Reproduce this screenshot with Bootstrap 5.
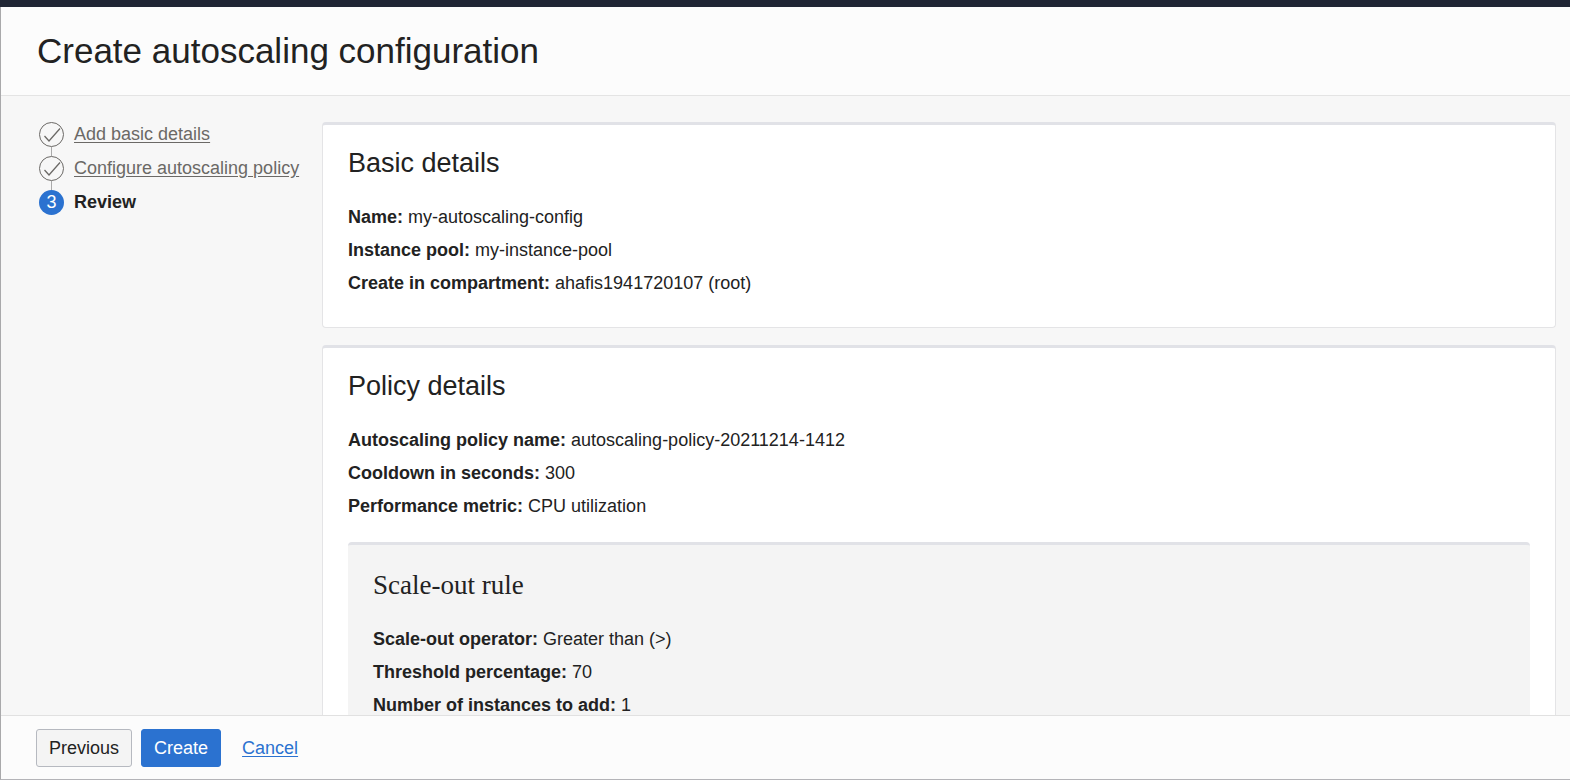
<!DOCTYPE html>
<html lang="en">
<head>
<meta charset="utf-8">
<meta name="viewport" content="width=device-width, initial-scale=1">
<title>Create autoscaling configuration</title>
<link href="https://cdn.jsdelivr.net/npm/bootstrap@5.3.0/dist/css/bootstrap.min.css" rel="stylesheet">
<style>
  body { font-family: "Liberation Sans", Arial, sans-serif; font-size: 18px; line-height: 33px; color: #222; background: #f7f7f7; }
  .top-strip { height: 7px; background: #202634; }
  .dialog-frame { border-left: 1px solid #a9a9ab; border-bottom: 1px solid #b4b4b8; min-height: 0; }
  .dialog-head { background: #fcfcfc; border-bottom: 1px solid #e4e4e4; padding: 22px 36px; }
  .dialog-head h1 { font-size: 35px; line-height: 44px; font-weight: 400; }
  .dialog-main { min-height: 0; padding: 26px 14px 0 0; }
  .step-nav { width: 321px; padding-left: 38px; margin-top: -4px; }
  .step-item { gap: 10px; height: 34px; line-height: 32px; }
  .step-item a { color: #6b6966; text-underline-offset: 2px; }
  .step-num { width: 25px; height: 25px; margin-top: 4px; background: #2b72d0; color: #fff; line-height: 25px; }
  .step-icon { width: 25px; height: 34px; overflow: visible; }
  .review-card { background: #fff; border: 1px solid #e4e4e6; border-top: 3px solid #e1e2e7; border-radius: 4px; padding: 20px 25px 27px; margin-bottom: 17px; }
  .rule-panel { background: #f4f4f4; border-top: 3px solid #e1e2e7; border-radius: 4px; padding: 22px 25px 27px; margin-top: 19px; }
  .review-card h2, .rule-panel h3 { font-size: 27px; line-height: 36px; font-weight: 400; margin-bottom: 20px; }
  .rule-panel h3 { font-family: "Liberation Serif", "Times New Roman", serif; }
  dl dt, dl dd { display: inline; margin: 0; }
  .dialog-foot { background: #fcfcfc; border-top: 1px solid #e1e1e1; padding: 13px 35px 12px; }
  .dialog-foot .btn { font-size: 18px; line-height: 24px; padding: 6px 12px; border-radius: 3px; }
  .btn-prev { --bs-btn-bg: #f4f4f4; --bs-btn-border-color: #b6b9c0; --bs-btn-color: #222; --bs-btn-hover-bg: #e9e9e9; --bs-btn-hover-border-color: #b6b9c0; margin-right: 9px; }
  .btn-create { --bs-btn-bg: #2b72d0; --bs-btn-border-color: #2b72d0; --bs-btn-color: #fff; --bs-btn-hover-bg: #2260b2; --bs-btn-hover-color: #fff; margin-right: 21px; }
  .dialog-foot a { color: #2b72d0; line-height: 24px; text-underline-offset: 2px; }
</style>
</head>
<body>
<div class="vh-100 d-flex flex-column overflow-hidden">
  <div class="top-strip flex-shrink-0"></div>
  <div class="dialog-frame flex-grow-1 d-flex flex-column">
    <header class="dialog-head">
      <h1 class="mb-0">Create autoscaling configuration</h1>
    </header>

    <div class="dialog-main flex-grow-1 d-flex align-items-start overflow-hidden">
      <nav class="step-nav flex-shrink-0" aria-label="Steps">
        <ol class="list-unstyled mb-0">
          <li class="step-item d-flex align-items-start">
            <svg class="step-icon" viewBox="0 0 25 34" fill="none" stroke="#6b6966" aria-hidden="true"><path d="M12.5 29v9" stroke="#aaa"/><circle cx="12.5" cy="16.5" r="12"/><path d="M5.5 18l4.5 5L21 10.5" stroke-width="1.3"/></svg>
            <a href="#">Add basic details</a>
          </li>
          <li class="step-item d-flex align-items-start">
            <svg class="step-icon" viewBox="0 0 25 34" fill="none" stroke="#6b6966" aria-hidden="true"><path d="M12.5 29v9" stroke="#aaa"/><circle cx="12.5" cy="16.5" r="12"/><path d="M5.5 18l4.5 5L21 10.5" stroke-width="1.3"/></svg>
            <a href="#">Configure autoscaling policy</a>
          </li>
          <li class="step-item d-flex align-items-start fw-bold" aria-current="step">
            <span class="step-num rounded-circle text-center fw-normal">3</span>
            <span>Review</span>
          </li>
        </ol>
      </nav>

      <main class="flex-grow-1">
        <section class="review-card">
          <h2>Basic details</h2>
          <dl class="mb-0">
            <div><dt>Name:</dt> <dd>my-autoscaling-config</dd></div>
            <div><dt>Instance pool:</dt> <dd>my-instance-pool</dd></div>
            <div><dt>Create in compartment:</dt> <dd>ahafis1941720107 (root)</dd></div>
          </dl>
        </section>

        <section class="review-card">
          <h2>Policy details</h2>
          <dl class="mb-0">
            <div><dt>Autoscaling policy name:</dt> <dd>autoscaling-policy-20211214-1412</dd></div>
            <div><dt>Cooldown in seconds:</dt> <dd>300</dd></div>
            <div><dt>Performance metric:</dt> <dd>CPU utilization</dd></div>
          </dl>
          <div class="rule-panel">
            <h3>Scale-out rule</h3>
            <dl class="mb-0">
              <div><dt>Scale-out operator:</dt> <dd>Greater than (&gt;)</dd></div>
              <div><dt>Threshold percentage:</dt> <dd>70</dd></div>
              <div><dt>Number of instances to add:</dt> <dd>1</dd></div>
            </dl>
          </div>
        </section>
      </main>
    </div>

    <footer class="dialog-foot d-flex align-items-center">
      <button type="button" class="btn btn-prev">Previous</button>
      <button type="button" class="btn btn-create">Create</button>
      <a href="#">Cancel</a>
    </footer>
  </div>
</div>
<script src="https://cdn.jsdelivr.net/npm/bootstrap@5.3.0/dist/js/bootstrap.bundle.min.js"></script>
</body>
</html>
